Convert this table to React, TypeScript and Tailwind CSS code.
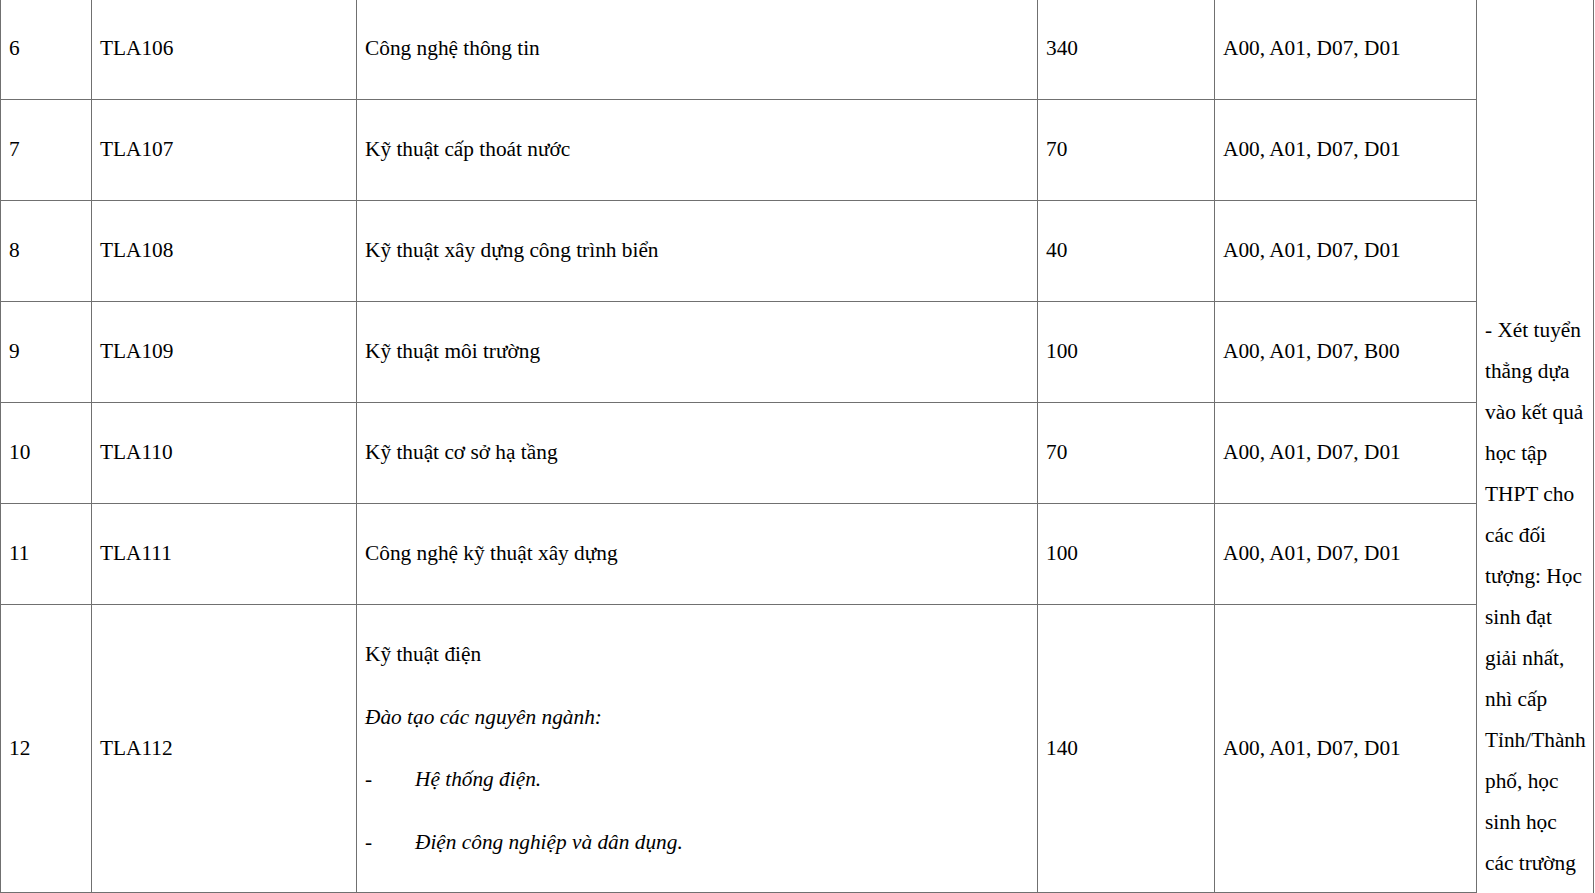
const rows = [
  { stt: '6', code: 'TLA106', name: 'Công nghệ thông tin', quota: '340', combo: 'A00, A01, D07, D01' },
  { stt: '7', code: 'TLA107', name: 'Kỹ thuật cấp thoát nước', quota: '70', combo: 'A00, A01, D07, D01' },
  { stt: '8', code: 'TLA108', name: 'Kỹ thuật xây dựng công trình biển', quota: '40', combo: 'A00, A01, D07, D01' },
  { stt: '9', code: 'TLA109', name: 'Kỹ thuật môi trường', quota: '100', combo: 'A00, A01, D07, B00' },
  { stt: '10', code: 'TLA110', name: 'Kỹ thuật cơ sở hạ tầng', quota: '70', combo: 'A00, A01, D07, D01' },
  { stt: '11', code: 'TLA111', name: 'Công nghệ kỹ thuật xây dựng', quota: '100', combo: 'A00, A01, D07, D01' },
];

const noteLines = [
  '- Xét tuyển',
  'thẳng dựa',
  'vào kết quả',
  'học tập',
  'THPT cho',
  'các đối',
  'tượng: Học',
  'sinh đạt',
  'giải nhất,',
  'nhì cấp',
  'Tỉnh/Thành',
  'phố, học',
  'sinh học',
  'các trường',
];

function Cell({ children }: { children: React.ReactNode }) {
  return <div className="flex items-center border-r border-b border-[#707070] pl-2 pr-2 pb-[1px]">{children}</div>;
}

export default function App() {
  return (
    <div className="h-[893px] overflow-hidden bg-white text-black" style={{ fontFamily: '"Liberation Serif", "Times New Roman", serif' }}>
      <div className="-mt-[1px] grid grid-cols-[91px_265px_681px_177px_262px_117px] grid-rows-[101px_101px_101px_101px_101px_101px_288px] border-l border-[#707070] text-[21.33px] leading-[41px]">
        <div className="col-start-6 row-start-1 row-span-7 overflow-hidden border-r border-[#707070] pl-2 pr-1 pt-[311px] whitespace-nowrap">
          {noteLines.map((l) => <div key={l}>{l}</div>)}
        </div>
        {rows.map((r) => [
          <Cell key={r.stt + 'a'}>{r.stt}</Cell>,
          <Cell key={r.stt + 'b'}>{r.code}</Cell>,
          <Cell key={r.stt + 'c'}>{r.name}</Cell>,
          <Cell key={r.stt + 'd'}>{r.quota}</Cell>,
          <Cell key={r.stt + 'e'}>{r.combo}</Cell>,
        ])}
        <Cell>12</Cell>
        <Cell>TLA112</Cell>
        <div className="flex flex-col justify-center gap-[21.5px] border-r border-b border-[#707070] pl-2 pr-2">
          <p>Kỹ thuật điện</p>
          <p className="italic">Đào tạo các nguyên ngành:</p>
          <p className="flex"><span className="w-[50px] shrink-0">-</span><span className="italic">Hệ thống điện.</span></p>
          <p className="flex"><span className="w-[50px] shrink-0">-</span><span className="italic">Điện công nghiệp và dân dụng.</span></p>
        </div>
        <Cell>140</Cell>
        <Cell>A00, A01, D07, D01</Cell>
      </div>
    </div>
  );
}
